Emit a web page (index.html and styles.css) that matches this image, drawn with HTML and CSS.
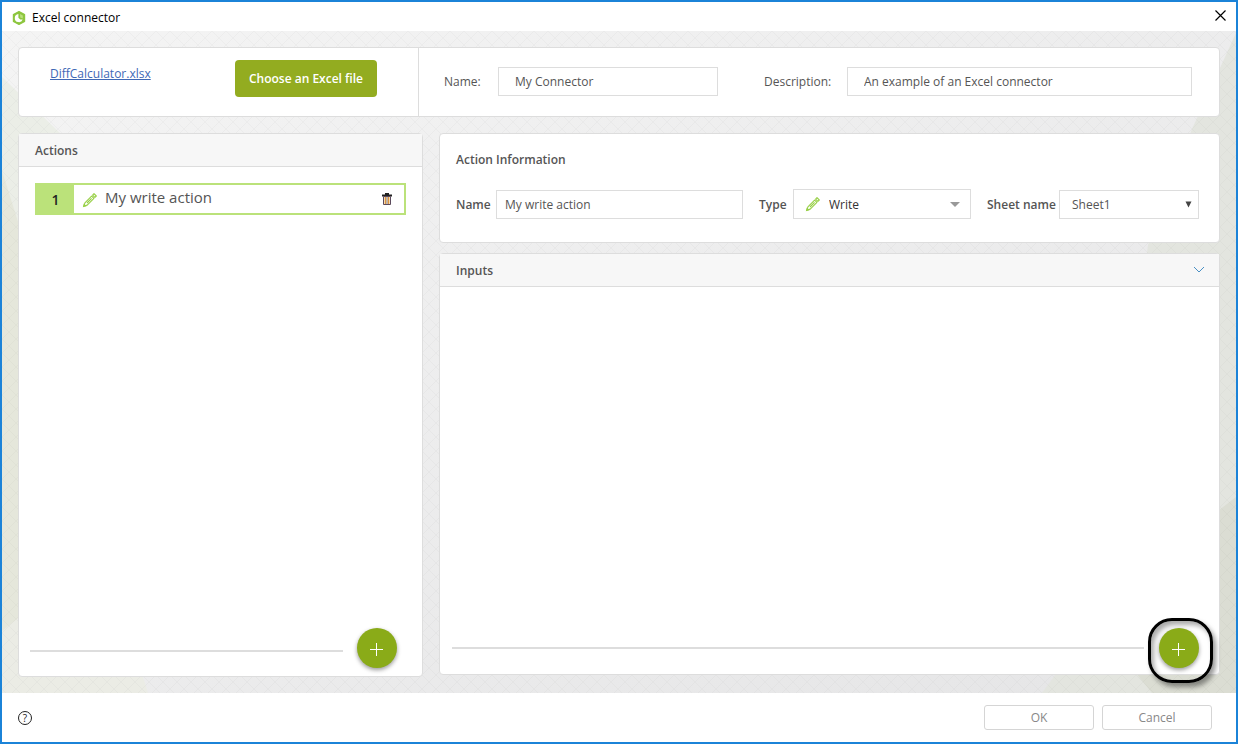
FILE: index.html
```html
<!DOCTYPE html>
<html lang="en">
<head>
<meta charset="utf-8">
<meta name="viewport" content="width=device-width, initial-scale=1">
<title>Excel connector</title>
<link rel="stylesheet" href="styles.css">
</head>
<body>
<svg class="sprites" aria-hidden="true">
  <symbol id="pencil" viewBox="0 0 16 16">
    <path d="M2 14 L2.9 10.8 L9.6 4.1 L11.9 6.4 L5.2 13.1 Z M5 11 L9.6 6.4 M10.6 3.1 L12 1.7 L14.3 4 L12.9 5.4 Z" fill="none" stroke="#97cf45" stroke-width="1.1" stroke-linejoin="round"/>
    <path d="M0.8 15.2 L1.8 11.4 L4.6 14.2 Z" fill="#97cf45"/>
  </symbol>
</svg>
<div class="window">
  <header class="titlebar">
    <svg class="logo" viewBox="0 0 14 14" aria-hidden="true">
      <path d="M7 0.6 L12.6 3.6 V10.4 L7 13.4 L1.4 10.4 V3.6 Z" fill="#8dc63f" stroke="#8dc63f" stroke-width="1.2" stroke-linejoin="round"/>
      <path d="M6.4 3 A4.1 4.1 0 1 0 10.7 8.6 L8.2 8.4 L6.4 6.8 Z" fill="#fff"/>
      <path d="M8 3 L10.8 4.6 V7.4 L8.2 6.4 Z" fill="#b9e07c"/>
    </svg>
    <h1 class="title">Excel connector</h1>
    <button class="close" type="button" aria-label="Close">
      <svg viewBox="0 0 11 11" aria-hidden="true"><path d="M0.5 0.5 L10.5 10.5 M10.5 0.5 L0.5 10.5" stroke="#000" stroke-width="1.2"/></svg>
    </button>
  </header>

  <main class="content">
    <svg class="backdrop" viewBox="0 0 1234 662" preserveAspectRatio="none" aria-hidden="true">
      <defs>
        <linearGradient id="shade" x1="0" y1="0" x2="1" y2="1">
          <stop offset="0" stop-color="#f4f4f4"/><stop offset="1" stop-color="#e5e5e6"/>
        </linearGradient>
        <pattern id="mesh" width="14" height="14" patternUnits="userSpaceOnUse">
          <path d="M0 0 L14 14 M14 0 L0 14" stroke="#000" stroke-opacity="0.025" fill="none"/>
        </pattern>
      </defs>
      <rect width="1234" height="662" fill="url(#shade)"/>
      <path d="M0 46 L60 104 L140 200 V662 H0 Z" fill="#ebeee7"/>
      <path d="M0 140 L60 330 V560 L0 600 Z" fill="#e5e7db"/>
      <path d="M0 600 L16 587 L100 520 L146 662 H0 Z" fill="#ebece5"/>
      <path d="M1234 2 L1190 98 L1146 214 L1100 580 L1040 662 H1234 Z" fill="#e3e5df"/>
      <path d="M1234 466 L1216 480 L1100 600 L1150 662 H1234 Z" fill="#dbddd3"/>
      <rect width="1234" height="662" fill="url(#mesh)"/>
    </svg>

    <section class="card source">
      <div class="file">
        <a class="file-link" href="#">DiffCalculator.xlsx</a>
        <button class="choose" type="button">Choose an Excel file</button>
      </div>
      <div class="meta">
        <label class="label" for="conn-name">Name:</label>
        <input class="field conn-name" id="conn-name" type="text" value="My Connector">
        <label class="label desc-label" for="conn-desc">Description:</label>
        <input class="field conn-desc" id="conn-desc" type="text" value="An example of an Excel connector">
      </div>
    </section>

    <div class="columns">
      <section class="card actions">
        <h2 class="card-head">Actions</h2>
        <ol class="action-list">
          <li class="action">
            <span class="number">1</span>
            <svg class="pencil" aria-hidden="true"><use href="#pencil"/></svg>
            <span class="action-name">My write action</span>
            <button class="delete" type="button" aria-label="Delete action">
              <svg viewBox="0 0 12 13" aria-hidden="true">
                <path d="M4 1 H8" stroke="#222" stroke-width="2"/>
                <path d="M1 2.5 H11" stroke="#222" stroke-width="2"/>
                <path d="M2.5 3.5 V11.5 H9.5 V3.5 Z" fill="#f6d9b0" stroke="#5b4a5c"/>
                <path d="M4.5 4 V11 M7.5 4 V11" stroke="#dc9440"/>
                <path d="M6 4 V11" stroke="#8a90a0"/>
              </svg>
            </button>
          </li>
        </ol>
        <div class="add-row">
          <span class="rule"></span>
          <button class="add" type="button" aria-label="Add action"><svg viewBox="0 0 13 13" aria-hidden="true"><path d="M6.5 0 V13 M0 6.5 H13" stroke="#fff"/></svg></button>
        </div>
      </section>

      <div class="details">
        <section class="card info">
          <h2 class="info-title">Action Information</h2>
          <div class="info-row">
            <label class="strong" for="act-name">Name</label>
            <input class="field act-name" id="act-name" type="text" value="My write action">
            <label class="strong type-label" for="act-type">Type</label>
            <div class="type-box">
              <svg class="pencil" aria-hidden="true"><use href="#pencil"/></svg>
              <select class="type-select" id="act-type"><option>Write</option></select>
              <svg class="caret" viewBox="0 0 10 5" aria-hidden="true"><path d="M0 0 H10 L5 5 Z" fill="#999"/></svg>
            </div>
            <label class="strong sheet-label" for="sheet">Sheet name</label>
            <div class="sheet-box">
              <select class="sheet-select" id="sheet"><option>Sheet1</option></select>
              <svg class="sheet-caret" viewBox="0 0 7 7" aria-hidden="true"><path d="M0.5 0.5 H6.5 L3.5 6.5 Z" fill="#444"/></svg>
            </div>
          </div>
        </section>

        <section class="card inputs">
          <h2 class="card-head">Inputs
            <button class="collapse" type="button" aria-label="Collapse inputs"><svg viewBox="0 0 12 7" aria-hidden="true"><path d="M1 1 L6 6 L11 1" fill="none" stroke="#4a90c4"/></svg></button>
          </h2>
          <div class="add-row inputs-add">
            <span class="rule"></span>
            <span class="highlight">
              <button class="add" type="button" aria-label="Add input"><svg viewBox="0 0 13 13" aria-hidden="true"><path d="M6.5 0 V13 M0 6.5 H13" stroke="#fff"/></svg></button>
            </span>
          </div>
        </section>
      </div>
    </div>
  </main>

  <footer class="footer">
    <button class="help" type="button" aria-label="Help">?</button>
    <button class="btn" type="button">OK</button>
    <button class="btn" type="button">Cancel</button>
  </footer>
</div>
</body>
</html>
```
FILE: styles.css
```css
* { box-sizing: border-box; }

body {
  margin: 0;
  font: 12px/16px "Open Sans", "Noto Sans", sans-serif;
  color: #555;
}

button, input, select { font: inherit; color: inherit; }
button { padding: 0; border: 0; background: none; cursor: pointer; }
h1, h2, ol { margin: 0; padding: 0; font-size: inherit; }
svg { display: block; }

.sprites { position: absolute; width: 0; height: 0; }

.window {
  display: flex;
  flex-direction: column;
  min-height: 100vh;
  border: 2px solid #1b83d8;
  background: #fff;
}

.titlebar {
  display: flex;
  align-items: center;
  height: 29px;
  padding: 2px 10px 0;
}
.logo { width: 14px; height: 14px; }
.title { margin-left: 6px; color: #000; font-weight: 400; }
.close { margin: 0 0 4px auto; }
.close svg { width: 11px; height: 11px; }

.content {
  position: relative;
  display: flex;
  flex: 1;
  flex-direction: column;
  gap: 16px;
  padding: 16px;
}
.backdrop { position: absolute; inset: 0; width: 100%; height: 100%; }

.card {
  position: relative;
  border: 1px solid #ddd;
  border-radius: 4px;
  background: #fff;
}
.card-head {
  display: flex;
  align-items: center;
  justify-content: space-between;
  height: 33px;
  padding: 2px 14px 0 16px;
  border-bottom: 1px solid #ddd;
  background: #f7f7f7;
  font-weight: 600;
}

.source { display: flex; height: 70px; }
.file {
  display: flex;
  align-items: flex-start;
  justify-content: space-between;
  width: 400px;
  padding: 12px 41px 0 31px;
  border-right: 1px solid #ddd;
}
.file-link { margin-top: 6px; color: #3f68b5; }
.choose {
  width: 142px;
  height: 37px;
  border-radius: 4px;
  background: #93ac20;
  color: #fff;
  font-weight: 600;
}
.meta { display: flex; flex: 1; align-items: center; padding: 0 27px 1px 25px; }
.label { width: 54px; }
.field {
  height: 29px;
  min-width: 0;
  padding: 0 16px;
  border: 1px solid #ddd;
  border-radius: 0;
  background: #fff;
}
.conn-name { width: 220px; }
.desc-label { width: 83px; margin-left: 46px; }
.conn-desc { flex: 1; }

.columns { display: flex; flex: 1; gap: 16px; }
.actions { display: flex; flex-direction: column; width: 405px; }
.action-list { flex: 1; padding: 16px; list-style: none; }
.action {
  display: flex;
  align-items: center;
  height: 32px;
  padding-right: 11px;
  border: 2px solid #bbe27a;
}
.number {
  display: grid;
  place-items: center;
  align-self: stretch;
  width: 37px;
  padding-top: 2px;
  background: #bbe27a;
  color: #222;
  font-size: 14px;
  font-weight: 600;
}
.pencil { flex: none; width: 16px; height: 16px; }
.action .pencil { margin: 2px 7px 0 8px; }
.action-name { padding-bottom: 4px; font-size: 15px; }
.delete { margin-left: auto; }
.delete svg { width: 12px; height: 13px; }

.add-row { display: flex; align-items: center; gap: 14px; padding: 0 25px 8px 11px; }
.rule { flex: 1; height: 2px; margin-top: 6px; background: #ddd; }
.add {
  display: grid;
  place-items: center;
  width: 40px;
  height: 40px;
  border-radius: 50%;
  background: #8aab18;
  box-shadow: 0 2px 4px #0006;
}
.add svg { width: 13px; height: 13px; margin: 3px 1px 0 0; }

.details { display: flex; flex: 1; flex-direction: column; gap: 10px; min-width: 0; padding-bottom: 2px; }
.info { padding: 18px 20px 23px 16px; }
.info-title { font-weight: 600; }
.info-row { display: flex; align-items: center; margin-top: 21px; }
.strong { width: 40px; padding-top: 2px; font-weight: 600; }
.act-name { flex: 1; padding: 0 8px; }
.type-label { width: 34px; margin-left: 16px; }
.type-box, .sheet-box {
  display: flex;
  align-items: center;
  height: 30px;
  border: 1px solid #ddd;
  background: #fff;
}
.type-box { width: 178px; padding: 0 10px 0 11px; color: #333; }
.type-select, .sheet-select {
  flex: 1;
  min-width: 0;
  height: 100%;
  padding: 2px 0 0;
  border: 0;
  background: none;
  appearance: none;
}
.type-select { margin-left: 8px; }
.caret { width: 10px; height: 5px; }
.sheet-label { width: 72px; margin-left: 16px; }
.sheet-box { width: 140px; height: 29px; padding: 0 6px 0 12px; }
.sheet-caret { width: 7px; height: 7px; }

.inputs { display: flex; flex: 1; flex-direction: column; }
.collapse { padding-bottom: 3px; }
.collapse svg { width: 12px; height: 7px; }
.inputs-add { gap: 4px; margin-top: auto; padding: 0 6px 0 12px; }
.inputs-add .rule { margin-top: 4px; }
.highlight {
  display: grid;
  place-items: center;
  width: 65px;
  height: 65px;
  margin: 0 0 -9px;
  padding: 0 4px 5px 0;
  border: 3px solid #000;
  border-radius: 24px;
  box-shadow: 3px 4px 5px #0006, inset 3px 4px 5px #0005;
}

.footer {
  display: flex;
  align-items: center;
  gap: 8px;
  height: 49px;
  padding: 0 24px 0 16px;
}
.help {
  width: 14px;
  height: 14px;
  margin-right: auto;
  border: 1px solid #222;
  border-radius: 50%;
  color: #222;
  font-size: 10px;
  line-height: 12px;
}
.btn {
  width: 110px;
  height: 25px;
  border: 1px solid #d5d5d5;
  border-radius: 3px;
  background: #fff;
  color: #888;
}
```
